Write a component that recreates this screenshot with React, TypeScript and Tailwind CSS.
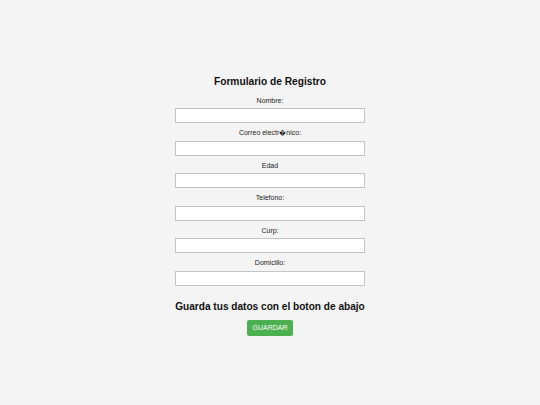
const fields = ["Nombre:", "Correo electr\uFFFDnico:", "Edad", "Telefono:", "Curp:", "Domicilio:"];

export default function App() {
  return (
    <div className="min-h-screen w-full bg-[#f4f4f4] pt-[75px] font-['Liberation_Sans',Arial,sans-serif] text-[#111]">
      <form className="mx-auto flex w-[190px] flex-col items-center" onSubmit={(e) => e.preventDefault()}>
        <h2 className="h-[14px] text-[10.2px] leading-[14px] font-bold whitespace-nowrap">Formulario de Registro</h2>
        <div className="mt-[7.5px] flex w-full flex-col">
          {fields.map((f) => (
            <div key={f} className="mb-[6px] flex flex-col items-center">
              <label className="h-[8px] text-[7px] leading-[8px] text-[#222]">{f}</label>
              <input className="mt-[3.5px] h-[15px] w-full border border-[#c4c4c4] bg-white outline-none" />
            </div>
          ))}
        </div>
        <h3 className="mt-[8px] h-[13px] text-[10.1px] leading-[13px] font-bold whitespace-nowrap">Guarda tus datos con el boton de abajo</h3>
        <button type="submit" className="mt-[7.5px] h-[16px] w-[46px] rounded-[2px] bg-[#4caf50] text-[7px] text-white">GUARDAR</button>
      </form>
    </div>
  );
}
